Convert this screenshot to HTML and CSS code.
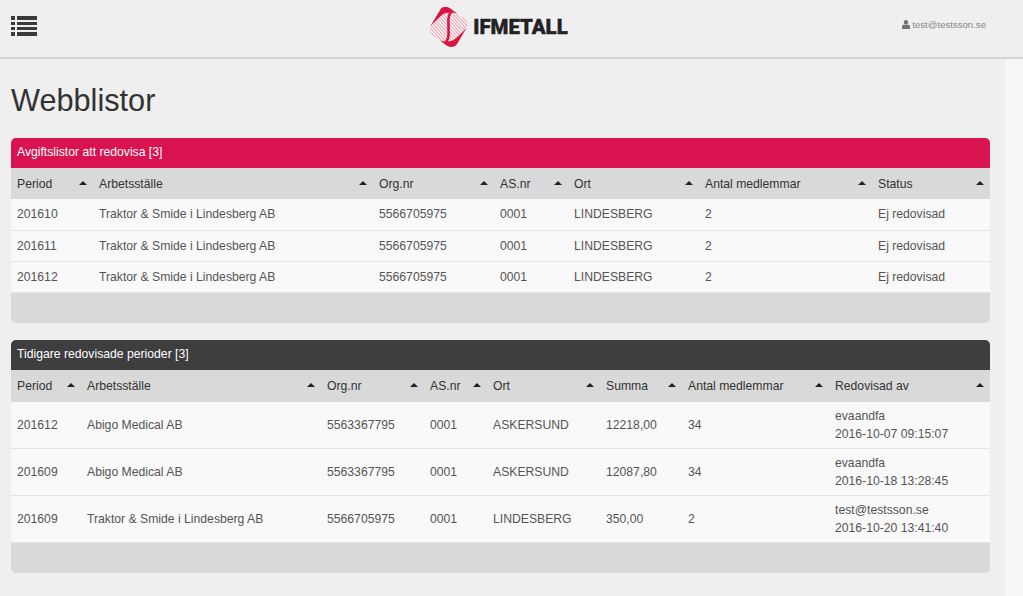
FILE: index.html
```html
<!DOCTYPE html>
<html lang="sv">
  <head>
    <meta charset="UTF-8" />
    <title>Webblistor</title>
    <link rel="stylesheet" href="styles.css">
  </head>
  <body>
    <header class="topbar">
      <div class="menu-icon">
        <svg width="26" height="22" viewBox="0 0 26 22">
          <rect x="0" y="1" width="4" height="4" />
          <rect x="6" y="1" width="20" height="4" />
          <rect x="0" y="7" width="4" height="3" />
          <rect x="6" y="7" width="20" height="3" />
          <rect x="0" y="12" width="4" height="3" />
          <rect x="6" y="12" width="20" height="3" />
          <rect x="0" y="17" width="4" height="4" />
          <rect x="6" y="17" width="20" height="4" />
        </svg>
      </div>
      <div class="logo">
        <svg width="39" height="42" viewBox="0 0 39 42">
          <defs>
            <pattern id="ribbor" width="2.400" height="2.400" patternUnits="userSpaceOnUse" patternTransform="rotate(48)">
              <rect width="2.400" height="2.400" fill="#e9a0ad" />
              <rect width="2.400" height="1.300" fill="#ffffff" />
            </pattern>
          </defs>
          <path d="M12 2.500C15 .5 19 .5 22 3L36.500 13.500C39.500 16 39.500 19 37.500 22L28 38C25.500 41.500 21 42 18 40L3.500 29C.5 26.500 0 23 1.500 20Z" fill="url(#ribbor)" />
          <path d="M1.500 20L12 2.500C15 .5 19 .5 22 3L28 7.500C23 6 17 6 13 9C8 13 5 17 1.500 20Z" fill="#d9143f" />
          <path d="M37.500 22L27 39.500C24 41.500 20 41.500 17 39L11 34.500C16 36 22 36 26 33C31 29 34 25 37.500 22Z" fill="#d9143f" />
          <path d="M22 6C17.500 12 20 16 19.500 21C19 26 21.500 30 17 36" fill="none" stroke="#d9143f" stroke-width="2.600" />
        </svg>
        <span class="logo-text">IFMETALL</span>
      </div>
      <div class="user">
        <svg width="8" height="9" viewBox="0 0 8 9">
          <circle cx="4" cy="2.300" r="2.200" />
          <path d="M0 9V6.500C0 5.300 1 4.800 2.200 4.800H5.800C7 4.800 8 5.300 8 6.500V9Z" />
        </svg>
        test@testsson.se
      </div>
    </header>

    <div class="page">
      <main class="content">
        <h1>Webblistor</h1>

        <section class="panel">
          <div class="panel-title red">Avgiftslistor att redovisa [3]</div>
          <table>
            <colgroup>
              <col class="w82" /><col class="w280" /><col class="w121" /><col class="w74" /><col class="w131" /><col class="w173" /><col class="w118" />
            </colgroup>
            <thead>
              <tr>
                <th>Period</th>
                <th>Arbetsställe</th>
                <th>Org.nr</th>
                <th>AS.nr</th>
                <th>Ort</th>
                <th>Antal medlemmar</th>
                <th>Status</th>
              </tr>
            </thead>
            <tbody>
              <tr>
                <td>201610</td>
                <td>Traktor &amp; Smide i Lindesberg AB</td>
                <td>5566705975</td>
                <td>0001</td>
                <td>LINDESBERG</td>
                <td>2</td>
                <td>Ej redovisad</td>
              </tr>
              <tr>
                <td>201611</td>
                <td>Traktor &amp; Smide i Lindesberg AB</td>
                <td>5566705975</td>
                <td>0001</td>
                <td>LINDESBERG</td>
                <td>2</td>
                <td>Ej redovisad</td>
              </tr>
              <tr>
                <td>201612</td>
                <td>Traktor &amp; Smide i Lindesberg AB</td>
                <td>5566705975</td>
                <td>0001</td>
                <td>LINDESBERG</td>
                <td>2</td>
                <td>Ej redovisad</td>
              </tr>
            </tbody>
          </table>
          <div class="panel-footer"></div>
        </section>

        <section class="panel">
          <div class="panel-title dark">Tidigare redovisade perioder [3]</div>
          <table class="tall">
            <colgroup>
              <col class="w70" /><col class="w240" /><col class="w103" /><col class="w63" /><col class="w113" /><col class="w82" /><col class="w147" /><col class="w161" />
            </colgroup>
            <thead>
              <tr>
                <th>Period</th>
                <th>Arbetsställe</th>
                <th>Org.nr</th>
                <th>AS.nr</th>
                <th>Ort</th>
                <th>Summa</th>
                <th>Antal medlemmar</th>
                <th>Redovisad av</th>
              </tr>
            </thead>
            <tbody>
              <tr>
                <td>201612</td>
                <td>Abigo Medical AB</td>
                <td>5563367795</td>
                <td>0001</td>
                <td>ASKERSUND</td>
                <td>12218,00</td>
                <td>34</td>
                <td>evaandfa<br />2016-10-07 09:15:07</td>
              </tr>
              <tr>
                <td>201609</td>
                <td>Abigo Medical AB</td>
                <td>5563367795</td>
                <td>0001</td>
                <td>ASKERSUND</td>
                <td>12087,80</td>
                <td>34</td>
                <td>evaandfa<br />2016-10-18 13:28:45</td>
              </tr>
              <tr>
                <td>201609</td>
                <td>Traktor &amp; Smide i Lindesberg AB</td>
                <td>5566705975</td>
                <td>0001</td>
                <td>LINDESBERG</td>
                <td>350,00</td>
                <td>2</td>
                <td>test@testsson.se<br />2016-10-20 13:41:40</td>
              </tr>
            </tbody>
          </table>
          <div class="panel-footer"></div>
        </section>
      </main>
      <div class="scroll-track"></div>
    </div>
  </body>
</html>
```

FILE: styles.css
```css
* {
  box-sizing: border-box;
}

html,
body {
  height: 100%;
}

body {
  margin: 0;
  height: 596px;
  overflow: hidden;
  background-color: #efefef;
  color: #555;
  font-family: "Liberation Sans", Arial, sans-serif;
  font-size: 12.2px;
}

.topbar {
  display: grid;
  grid-template-columns: 1fr auto 1fr;
  align-items: center;
  height: 59px;
  padding: 0 37px 5px 11px;
  background-color: #efefef;
  border-bottom: 2px solid #d8d2d3;
}

.menu-icon {
  display: flex;
  fill: #3a3a3a;
}

.logo {
  display: flex;
  align-items: center;
  gap: 5px;
  margin-top: 1px;
}

.logo-text {
  color: #222;
  font-family: Roboto, sans-serif;
  font-size: 20.4px;
  font-weight: 900;
  -webkit-text-stroke: 0.4px #222;
}

.user {
  justify-self: end;
  display: flex;
  align-items: center;
  gap: 2px;
  margin-top: -4px;
  color: #888;
  font-size: 9.6px;
}

.user svg {
  fill: #6f7478;
}

.page {
  display: flex;
  height: 537px;
}

.content {
  flex: 1;
  padding: 0 15px 0 11px;
}

.scroll-track {
  width: 18px;
  background-color: #f7f7f7;
}

h1 {
  margin: 23px 0 18px;
  color: #333;
  font-size: 30.7px;
  font-weight: 400;
  line-height: 38px;
}

.panel {
  margin-bottom: 17px;
}

.panel-title {
  height: 30px;
  padding: 0 6px;
  border-radius: 5px 5px 0 0;
  color: #fff;
  line-height: 29px;
}

.panel-title.red {
  background-color: #d9134f;
}

.panel-title.dark {
  background-color: #3e3e3e;
}

.panel-footer {
  height: 30px;
  background-color: #d9d9d9;
  border-radius: 0 0 5px 5px;
}

table {
  width: 100%;
  border-collapse: collapse;
  table-layout: fixed;
}

th {
  position: relative;
  height: 31px;
  padding: 0 6px;
  background-color: #d9d9d9;
  color: #333;
  font-weight: 400;
  text-align: left;
}

.tall th {
  height: 32px;
}

th::after {
  content: "";
  position: absolute;
  top: 13px;
  right: 6px;
  border-left: 4px solid transparent;
  border-right: 4px solid transparent;
  border-bottom: 4px solid #222;
}

td {
  height: 31px;
  padding: 0 6px;
  background-color: #f9f9f9;
  border-bottom: 1px solid #e4e4e4;
  white-space: nowrap;
}

.tall td {
  height: 47px;
  line-height: 18px;
}

.w82 { width: 82px; }
.w280 { width: 280px; }
.w121 { width: 121px; }
.w74 { width: 74px; }
.w131 { width: 131px; }
.w173 { width: 173px; }
.w118 { width: 118px; }
.w70 { width: 70px; }
.w240 { width: 240px; }
.w103 { width: 103px; }
.w63 { width: 63px; }
.w113 { width: 113px; }
.w147 { width: 147px; }
.w161 { width: 161px; }
```
